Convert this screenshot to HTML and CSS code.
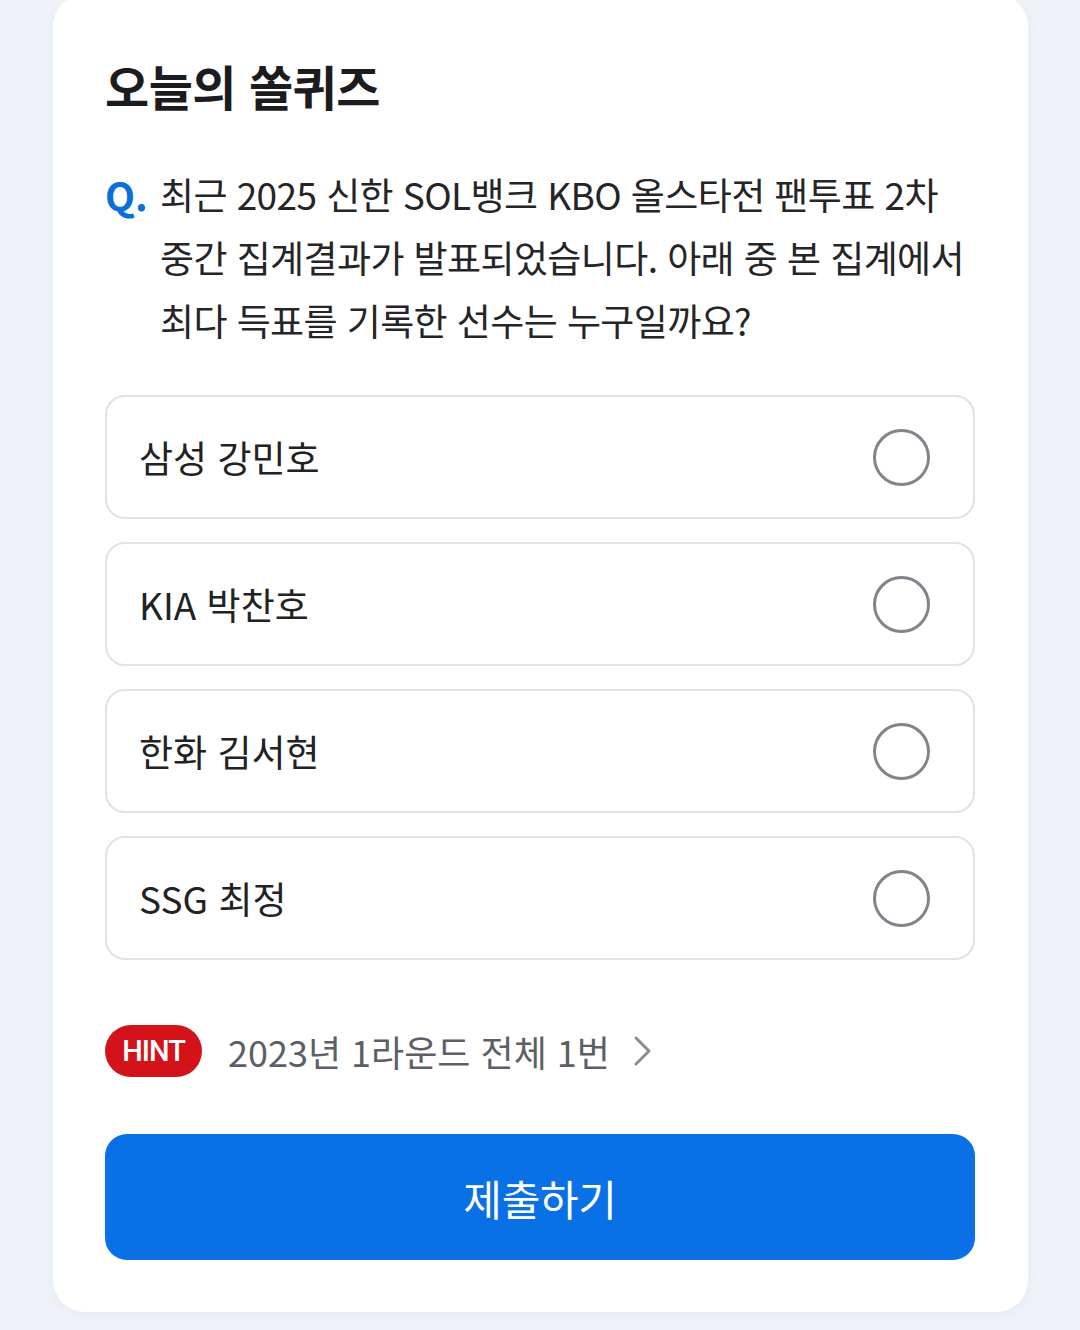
FILE: index.html
```html
<!DOCTYPE html>
<html lang="ko">
	<head>
		<meta charset="UTF-8">
		<title>오늘의 쏠퀴즈</title>
		<link rel="stylesheet" href="styles.css">
	</head>
	<body>
		<div class="quiz">
			<h2 class="quiz-title">오늘의 쏠퀴즈</h2>

			<div class="question">
				<span class="q-mark">Q.</span>
				<p class="q-text">최근 2025 신한 SOL뱅크 KBO 올스타전 팬투표 2차 중간 집계결과가 발표되었습니다. 아래 중 본 집계에서 최다 득표를 기록한 선수는 누구일까요?</p>
			</div>

			<ul class="options">
				<li class="option"><span>삼성 강민호</span><i class="radio"></i></li>
				<li class="option"><span>KIA 박찬호</span><i class="radio"></i></li>
				<li class="option"><span>한화 김서현</span><i class="radio"></i></li>
				<li class="option"><span>SSG 최정</span><i class="radio"></i></li>
			</ul>

			<a class="hint" href="javascript:;">
				<span class="hint-badge">HINT</span>
				<span class="hint-text">2023년 1라운드 전체 1번</span>
				<svg class="hint-arrow" width="20" height="32" viewBox="0 0 20 32">
					<path d="M3 3 L16 16 L3 29" fill="none" stroke="#8a8e94" stroke-width="3" stroke-linecap="round" stroke-linejoin="round"/>
				</svg>
			</a>

			<button class="submit" type="button">제출하기</button>
		</div>
	</body>
</html>
```

FILE: styles.css
```css
html,
body {
	margin: 0;
	padding: 0;
}

body {
	background: #eff3f9;
	font-family: "Noto Sans CJK KR", "Noto Sans", sans-serif;
	color: #222;
}

ul,
li,
p,
h2 {
	margin: 0;
	padding: 0;
	list-style: none;
}

.quiz {
	width: 975px;
	box-sizing: border-box;
	margin: -6px 0 19px 53px;
	padding: 60px 53px 52px 52px;
	background: #fff;
	border-radius: 32px;
	box-shadow: 0 2px 14px rgba(40, 60, 110, 0.05);
}

.quiz-title {
	font-size: 48px;
	line-height: 62px;
	font-weight: 700;
	color: #1c1c1e;
	letter-spacing: -0.5px;
}

.question {
	display: flex;
	margin: 47px -12px 0 0;
	font-size: 37px;
	line-height: 63px;
}

.q-mark {
	flex: none;
	width: 55px;
	color: #0b6fd9;
	font-weight: 700;
	font-size: 39px;
}

.q-text {
	color: #252527;
	word-break: keep-all;
	letter-spacing: -0.6px;
}

.options {
	margin-top: 43px;
	display: flex;
	flex-direction: column;
	gap: 23px;
}

.option {
	height: 124px;
	box-sizing: border-box;
	border: 2px solid #dfe2e6;
	border-radius: 20px;
	display: flex;
	align-items: center;
	justify-content: space-between;
	padding: 0 43px 0 32px;
	font-size: 37px;
	color: #222;
}

.radio {
	width: 57px;
	height: 57px;
	box-sizing: border-box;
	border: 3px solid #80858b;
	border-radius: 50%;
}

.hint {
	margin-top: 65px;
	display: flex;
	align-items: center;
	text-decoration: none;
	height: 52px;
}

.hint-badge {
	width: 97px;
	height: 52px;
	border-radius: 26px;
	background: #d4121a;
	color: #fff;
	font: 500 29px/52px Roboto, "Noto Sans", sans-serif;
	letter-spacing: -1px;
	text-align: center;
}

.hint-text {
	margin-left: 26px;
	font-size: 36px;
	color: #5c6066;
}

.hint-arrow {
	margin-left: 23px;
}

.submit {
	display: block;
	width: 100%;
	height: 126px;
	margin-top: 57px;
	border: 0;
	border-radius: 22px;
	background: #0a70e6;
	color: #fff;
	font-family: "Noto Sans CJK KR", "Noto Sans", sans-serif;
	font-size: 42px;
	letter-spacing: -0.3px;
}
```
